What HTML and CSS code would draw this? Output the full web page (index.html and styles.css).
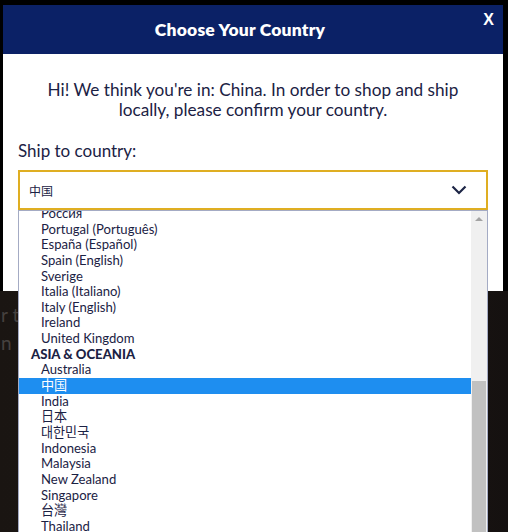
FILE: index.html
```html
<!DOCTYPE html>
<html lang="en">
<head>
  <meta charset="UTF-8">
  <title>Choose Your Country</title>
  <link rel="stylesheet" href="styles.css">
</head>
<body>
  <div class="backdrop">
    <p class="behind">r t<br>n</p>
  </div>

  <div class="modal">
    <div class="modal-head">
      <h2>Choose Your Country</h2>
      <span class="close">X</span>
    </div>
    <div class="modal-body">
      <p class="intro">Hi! We think you're in: China. In order to shop and ship locally, please confirm your country.</p>
      <label class="label">Ship to country:</label>
      <div class="select-wrap">
        <div class="select">
          <span>中国</span>
          <svg class="chevron" width="16" height="10" viewBox="0 0 16 10">
            <path d="M1.5 1.5 L8 8 L14.5 1.5" fill="none" stroke="#1d2546" stroke-width="2.2"/>
          </svg>
        </div>

        <div class="dropdown">
          <ul class="options">
            <li>Россия</li>
            <li>Portugal (Português)</li>
            <li>España (Español)</li>
            <li>Spain (English)</li>
            <li>Sverige</li>
            <li>Italia (Italiano)</li>
            <li>Italy (English)</li>
            <li>Ireland</li>
            <li>United Kingdom</li>
            <li class="group">ASIA &amp; OCEANIA</li>
            <li>Australia</li>
            <li class="selected">中国</li>
            <li>India</li>
            <li>日本</li>
            <li>대한민국</li>
            <li>Indonesia</li>
            <li>Malaysia</li>
            <li>New Zealand</li>
            <li>Singapore</li>
            <li>台灣</li>
            <li>Thailand</li>
          </ul>
          <div class="scrollbar">
            <span class="arrow"></span>
            <span class="thumb"></span>
          </div>
        </div>
      </div>
    </div>
  </div>
</body>
</html>
```

FILE: styles.css
```css
body {
  margin: 0;
  height: 532px;
  overflow: hidden;
  background: #000;
  font-family: Lato, "Noto Sans CJK SC", sans-serif;
  color: #1b2244;
  position: relative;
}

.backdrop {
  position: absolute;
  top: 291px; left: 0; right: 0; bottom: 0;
  background: linear-gradient(90deg, #1a1512 0%, #1f1916 60%, #151110 100%);
}

.behind {
  margin: 10px 0 0 1px;
  font-size: 19px;
  line-height: 28px;
  color: #46413f;
}

.modal {
  position: relative;
  margin: 5px 0 0 3px;
  width: 500px;
  background: #fff;
}

.modal-head {
  background: #0b2166;
  height: 49px;
  display: flex;
  align-items: center;
  justify-content: center;
  padding-right: 26px;
  position: relative;
}

.modal-head h2 {
  margin: 0;
  color: #fff;
  font-size: 17.5px;
  font-weight: 800;
  letter-spacing: 0.2px;
}

.close {
  position: absolute;
  right: 9px;
  top: 6px;
  color: #fff;
  font-weight: 900;
  font-size: 16px;
  font-family: "Liberation Sans", sans-serif;
}

.modal-body {
  height: 237px;
  padding: 0 15px;
}

.intro {
  margin: 0;
  padding: 26px 18px 0;
  text-align: center;
  font-size: 17.2px;
  line-height: 20px;
}

.label {
  display: block;
  margin-top: 21px;
  font-size: 17px;
  line-height: 19px;
  margin-bottom: 10px;
}

.select-wrap { position: relative; }

.select {
  height: 36px;
  border: 2px solid #dfae22;
  display: flex;
  align-items: center;
  justify-content: space-between;
  padding: 0 19px 0 9px;
  font-size: 12px;
}

.chevron { margin-top: -1px; }

.dropdown {
  position: absolute;
  left: 0;
  top: 40px;
  width: 468px;
  height: 330px;
  background: #fff;
  border: 1px solid #a4abc4;
  display: flex;
  overflow: hidden;
}

.options {
  list-style: none;
  margin: -5px 0 0 0;
  padding: 0;
  flex: 1;
  font-size: 13.1px;
}

.options li {
  height: 15.65px;
  line-height: 15.65px;
  padding-left: 22px;
  white-space: nowrap;
}

.options li.group {
  padding-left: 12px;
  font-weight: 900;
}

.options li.selected {
  background: #1e8ef0;
  color: #fff;
}

.scrollbar {
  width: 16px;
  background: #f0f0f0;
  display: flex;
  flex-direction: column;
  align-items: center;
}

.arrow {
  margin-top: 6px;
  width: 0; height: 0;
  border-left: 4px solid transparent;
  border-right: 4px solid transparent;
  border-bottom: 4px solid #a3a3a3;
}

.thumb {
  margin-top: 160px;
  width: 14px;
  flex: 1;
  background: #c1c1c1;
}
```
